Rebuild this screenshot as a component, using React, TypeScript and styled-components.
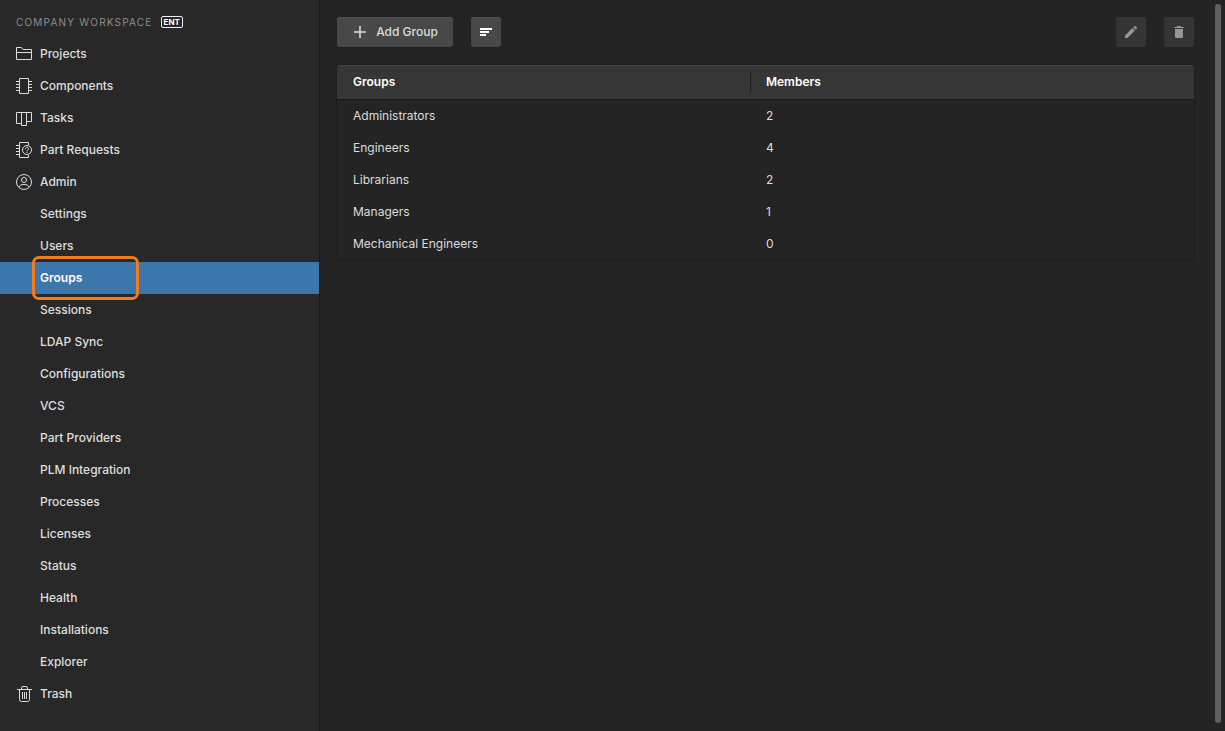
import React from "react";
import styled, { createGlobalStyle, css } from "styled-components";

const GlobalStyle = createGlobalStyle`
  *, *::before, *::after { box-sizing: border-box; }
  body {
    margin: 0;
    background: #242424;
    color: #dcdcdc;
    font-family: Inter, "Liberation Sans", sans-serif;
    font-size: 12px;
    line-height: 16px;
  }
`;

const Page = styled.div`
  display: flex;
  min-height: 100vh;
`;

const Sidebar = styled.aside`
  flex: 0 0 320px;
  padding-top: 6px;
  background: #282828;
  border-right: 1px solid #1d1d1d;
`;

const WorkspaceHeader = styled.div`
  display: flex;
  align-items: center;
  gap: 8px;
  height: 32px;
  padding-left: 16px;
`;

const WorkspaceName = styled.span`
  color: #8e8e8e;
  font-size: 10px;
  letter-spacing: 0.12em;
`;

const PlanBadge = styled.span`
  padding: 0 2px;
  border: 1px solid #f0f0f0;
  border-radius: 2px;
  color: #ffffff;
  font-size: 8px;
  font-weight: 700;
  line-height: 10px;
`;

const NavList = styled.ul`
  margin: 0;
  padding: 0;
  list-style: none;
`;

const NavLink = styled.a<{ $nested?: boolean; $active?: boolean }>`
  position: relative;
  display: flex;
  align-items: center;
  gap: 8px;
  height: 32px;
  padding-left: ${(p) => (p.$nested ? 40 : 16)}px;
  color: #dedede;
  font-weight: 500;
  text-decoration: none;
  ${(p) =>
    p.$active &&
    css`
      background: #3b76ad;
      color: #ffffff;
      font-weight: 600;
    `}
`;

const Highlight = styled.span`
  position: absolute;
  z-index: 1;
  top: -6px;
  left: 32px;
  width: 107px;
  height: 44px;
  border: 3px solid #f07c1b;
  border-radius: 7px;
  pointer-events: none;
`;

const LineIcon = styled.svg`
  flex: none;
  width: 16px;
  height: 16px;
  fill: none;
  stroke: #dcdcdc;
  stroke-width: 1;
`;

const Main = styled.main`
  flex: 1;
  min-width: 0;
  padding: 17px 21px 17px 17px;
`;

const Toolbar = styled.div`
  display: flex;
  gap: 18px;
  margin-bottom: 18px;
`;

const Spacer = styled.div`
  flex: 1;
`;

const Button = styled.button<{ $wide?: boolean }>`
  display: flex;
  align-items: center;
  justify-content: center;
  gap: 8px;
  width: ${(p) => (p.$wide ? "116px" : "30px")};
  height: 30px;
  padding: 0;
  border: 0;
  border-radius: 3px;
  background: #484848;
  box-shadow: inset 0 1px 0 #505050, 0 0 1px #181818;
  color: #dcdcdc;
  font: inherit;
  font-weight: 500;

  &:disabled {
    background: #353535;
    box-shadow: inset 0 1px 0 #393939;
    color: #969696;
  }
`;

const GlyphIcon = styled.svg`
  flex: none;
  width: 16px;
  height: 16px;
  fill: currentColor;
`;

const TableFrame = styled.div`
  border-radius: 3px;
  box-shadow: 0 0 0 1px #1e1e1e;
  overflow: hidden;
`;

const Table = styled.table`
  width: 100%;
  border-collapse: collapse;
  table-layout: fixed;
  text-align: left;
`;

const HeadRow = styled.tr`
  height: 35px;
  background: #363636;
  box-shadow: inset 0 1px 0 #454545, inset 0 -1px 0 #1b1b1b;
`;

const HeadCell = styled.th<{ $divided?: boolean }>`
  position: relative;
  width: ${(p) => (p.$divided ? "auto" : "48.3%")};
  padding: 0 0 1px ${(p) => (p.$divided ? 15 : 16)}px;
  color: #ffffff;
  font-weight: 600;
  ${(p) =>
    p.$divided &&
    css`
      &::before {
        content: "";
        position: absolute;
        top: 7px;
        bottom: 8px;
        left: -1px;
        width: 1px;
        background: #1d1d1d;
      }
    `}
`;

const Row = styled.tr`
  height: 32px;
`;

const Cell = styled.td`
  padding: 0 0 0 16px;

  & + & {
    padding-left: 15px;
  }
`;

const ScrollTrack = styled.div`
  display: flex;
  flex: 0 0 10px;
  padding: 4px 4px 8px 0;
`;

const ScrollThumb = styled.div`
  flex: 1;
  border-radius: 3px;
  background: #606060;
`;

const icons: Record<string, React.ReactNode> = {
  Projects: <path d="M.5 1.5h5l1.500 2h8.500v10H.5zM.5 6.500h15" />,
  Components: (
    <path d="M3.500.5h9v15h-9zM0 3.500h3M0 6.500h3M0 9.500h3M0 12.500h3M13 3.500h3M13 6.500h3M13 9.500h3M13 12.500h3" />
  ),
  Tasks: <path d="M5.500 13.500H.5v-11h15v9h-5M5.500 2.500v13h5v-13" />,
  "Part Requests": (
    <>
      <path d="M12.500 3V.5h-9v15h9V13M0 3.500h3M0 6.500h3M0 9.500h3M0 12.500h3" />
      <circle cx="11" cy="8" r="4.500" />
      <path d="M9.500 6.800c0-2 3-2 3-.2 0 1.200-1.500 1.200-1.500 2.400M11 9.800v1" />
    </>
  ),
  Admin: (
    <>
      <circle cx="8" cy="8" r="7.500" />
      <circle cx="8" cy="6" r="2.500" />
      <path d="M2.800 13.300c.8-2 2.200-2.800 5.200-2.800s4.400.8 5.200 2.800" />
    </>
  ),
  Trash: (
    <path d="M1 3.500h15M5.500 3.500v-1.500q0-1.500 1.500-1.500h3q1.500 0 1.500 1.500v1.500M3.500 3.500v10q0 2 2 2h6q2 0 2-2v-10M6.500 6v7M8.500 6v7M10.500 6v7" />
  ),
};

const adminPages = [
  "Settings",
  "Users",
  "Groups",
  "Sessions",
  "LDAP Sync",
  "Configurations",
  "VCS",
  "Part Providers",
  "PLM Integration",
  "Processes",
  "Licenses",
  "Status",
  "Health",
  "Installations",
  "Explorer",
];

const groups = [
  { name: "Administrators", members: 2 },
  { name: "Engineers", members: 4 },
  { name: "Librarians", members: 2 },
  { name: "Managers", members: 1 },
  { name: "Mechanical Engineers", members: 0 },
];

function SectionItem({ label, children }: { label: string; children?: React.ReactNode }) {
  return (
    <li>
      <NavLink href="#">
        <LineIcon viewBox="0 0 16 16" aria-hidden="true">
          {icons[label]}
        </LineIcon>
        {label}
      </NavLink>
      {children}
    </li>
  );
}

export default function App() {
  return (
    <>
      <GlobalStyle />
      <Page>
        <Sidebar>
          <WorkspaceHeader>
            <WorkspaceName>COMPANY WORKSPACE</WorkspaceName>
            <PlanBadge>ENT</PlanBadge>
          </WorkspaceHeader>
          <nav aria-label="Workspace">
            <NavList>
              <SectionItem label="Projects" />
              <SectionItem label="Components" />
              <SectionItem label="Tasks" />
              <SectionItem label="Part Requests" />
              <SectionItem label="Admin">
                <NavList>
                  {adminPages.map((page) => {
                    const active = page === "Groups";
                    return (
                      <li key={page}>
                        <NavLink
                          href="#"
                          $nested
                          $active={active}
                          aria-current={active ? "page" : undefined}
                        >
                          {page}
                          {active && <Highlight />}
                        </NavLink>
                      </li>
                    );
                  })}
                </NavList>
              </SectionItem>
              <SectionItem label="Trash" />
            </NavList>
          </nav>
        </Sidebar>
        <Main>
          <Toolbar>
            <Button type="button" $wide>
              <GlyphIcon viewBox="0 0 16 16" aria-hidden="true">
                <path d="M7.200 2h1.600v5.200H14v1.600H8.800V14H7.200V8.800H2V7.200h5.200z" />
              </GlyphIcon>
              Add Group
            </Button>
            <Button type="button" aria-label="Sort">
              <GlyphIcon viewBox="0 0 16 16" aria-hidden="true">
                <path fill="#fff" d="M2 4h12v2H2zM2 7h9v2H2zM2 10h6v2H2z" />
              </GlyphIcon>
            </Button>
            <Spacer />
            <Button type="button" aria-label="Edit" disabled>
              <GlyphIcon viewBox="0 0 16 16" aria-hidden="true">
                <path d="M2 11.500 9.400 4.100l2.500 2.500L4.500 14H2zM10.200 3.300l1.200-1.100q.6-.5 1.200 0l1.200 1.200q.5.600 0 1.200l-1.100 1.200z" />
              </GlyphIcon>
            </Button>
            <Button type="button" aria-label="Delete" disabled>
              <GlyphIcon viewBox="0 0 16 16" aria-hidden="true">
                <path d="M3 3h2.500l1-1h3l1 1H13v1H3zM4 5h8v7.500q0 1.500-1.500 1.500h-5Q4 14 4 12.500z" />
              </GlyphIcon>
            </Button>
          </Toolbar>
          <TableFrame>
            <Table>
              <thead>
                <HeadRow>
                  <HeadCell scope="col">Groups</HeadCell>
                  <HeadCell scope="col" $divided>
                    Members
                  </HeadCell>
                </HeadRow>
              </thead>
              <tbody>
                {groups.map((group) => (
                  <Row key={group.name}>
                    <Cell>{group.name}</Cell>
                    <Cell>{group.members}</Cell>
                  </Row>
                ))}
              </tbody>
            </Table>
          </TableFrame>
        </Main>
        <ScrollTrack aria-hidden="true">
          <ScrollThumb />
        </ScrollTrack>
      </Page>
    </>
  );
}
